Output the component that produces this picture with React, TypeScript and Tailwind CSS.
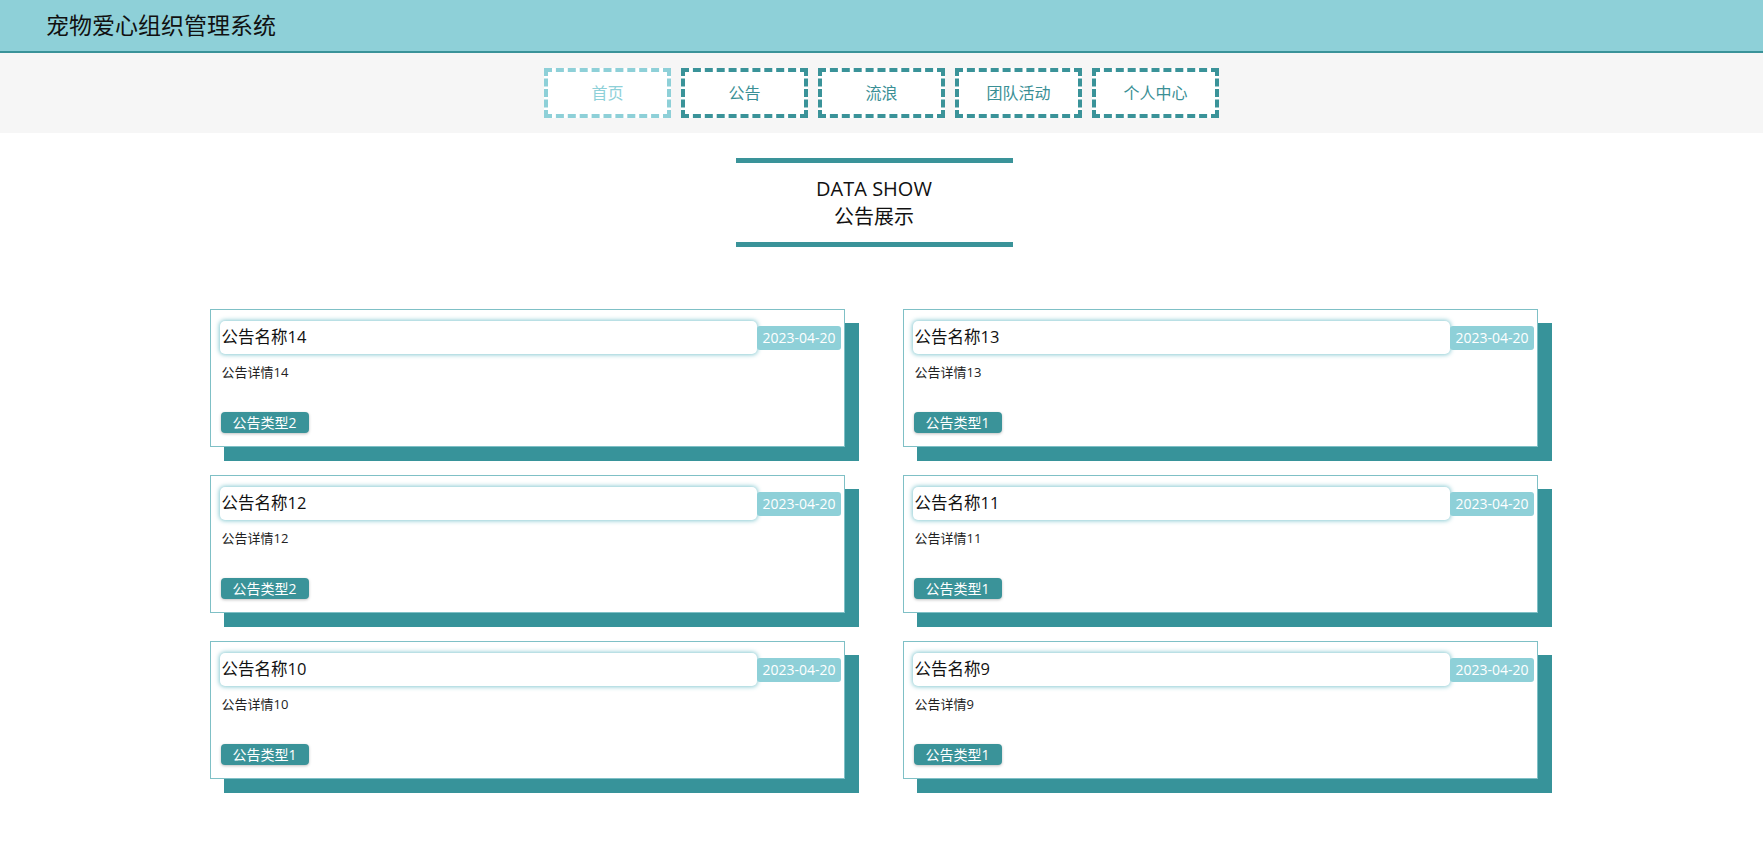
import React from 'react';

const notices = [
  { title: '公告名称14', detail: '公告详情14', type: '公告类型2', date: '2023-04-20' },
  { title: '公告名称13', detail: '公告详情13', type: '公告类型1', date: '2023-04-20' },
  { title: '公告名称12', detail: '公告详情12', type: '公告类型2', date: '2023-04-20' },
  { title: '公告名称11', detail: '公告详情11', type: '公告类型1', date: '2023-04-20' },
  { title: '公告名称10', detail: '公告详情10', type: '公告类型1', date: '2023-04-20' },
  { title: '公告名称9', detail: '公告详情9', type: '公告类型1', date: '2023-04-20' },
];

const navItems = ['首页', '公告', '流浪', '团队活动', '个人中心'];

export default function App() {
  return (
    <div className="min-h-screen bg-white font-['Open_Sans','Noto_Sans_CJK_SC',sans-serif] text-[#222]">
      <header className="h-[53px] bg-[#8ed0d8] border-b-2 border-[#3a9399] flex items-center pl-[46px]">
        <h1 className="text-[23px] text-[#111] font-['Noto_Sans_CJK_SC',sans-serif] -mt-[3px]">宠物爱心组织管理系统</h1>
      </header>

      <nav className="h-[80px] bg-[#f6f6f6] flex items-center justify-center gap-[10px]">
        {navItems.map((item, i) => (
          <div
            key={item}
            className={
              i === 0
                ? 'w-[127px] h-[50px] border-4 border-dashed border-[#8ed0d8] bg-white flex items-center justify-center text-[16px] text-[#8ed0d8]'
                : 'w-[127px] h-[50px] border-4 border-dashed border-[#3a9399] bg-white flex items-center justify-center text-[16px] text-[#3a8f95]'
            }
          >
            {item}
          </div>
        ))}
      </nav>

      <div className="flex justify-center mt-[25px] pr-[15px]">
        <div className="w-[277px] border-t-[5px] border-b-[5px] border-[#3a9399] flex flex-col items-center pt-[12px] pb-[11px] text-[20px] leading-[28px] text-[#111]">
          <span>DATA SHOW</span>
          <span>公告展示</span>
        </div>
      </div>

      <div className="w-[1344px] mx-auto pr-[16px] mt-[62px] grid grid-cols-2 gap-x-[58px] gap-y-[28px] pb-[40px]">
        {notices.map((n) => (
          <div
            key={n.title}
            className="h-[138px] bg-white border border-[#7fc0c6] shadow-[14px_14px_0_#37939a] flex flex-col pt-[11px] pb-[13px] pl-[9px] pr-[3px]"
          >
            <div className="flex items-center">
              <div className="flex-1 h-[33px] rounded-[5px] bg-white shadow-[0_0_4px_1px_rgba(110,190,200,0.8)] flex items-center pl-[2px] text-[16.5px] text-[#111]">
                {n.title}
              </div>
              <span className="h-[24px] px-[5px] rounded-[3px] bg-[#8ed0d8] text-white text-[14px] flex items-center">
                {n.date}
              </span>
            </div>
            <p className="mt-[9px] ml-[2px] text-[13px] text-[#222]">{n.detail}</p>
            <span className="mt-auto ml-[1px] self-start h-[21px] px-[12px] rounded-[4px] bg-[#3a9399] text-white text-[14px] flex items-center shadow-[0_1px_3px_rgba(0,0,0,0.25)]">
              {n.type}
            </span>
          </div>
        ))}
      </div>
    </div>
  );
}
